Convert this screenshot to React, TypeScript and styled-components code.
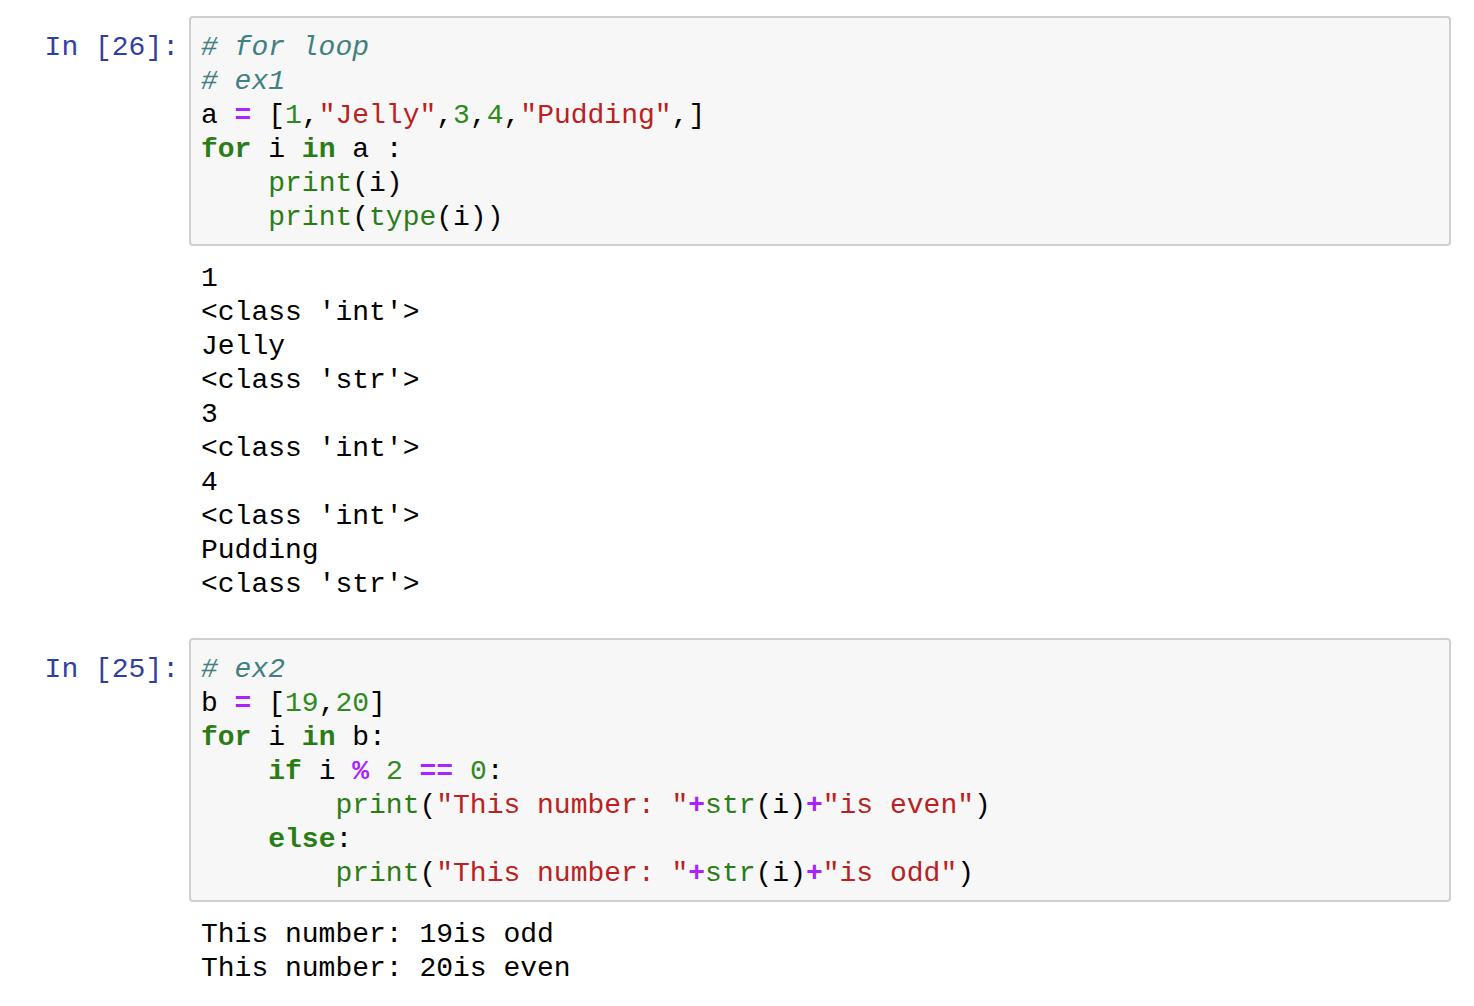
import React from "react";
import styled, { createGlobalStyle } from "styled-components";

const Global = createGlobalStyle`
  html, body { margin: 0; padding: 0; background: #ffffff; }
  body { font-family: "Liberation Mono", "DejaVu Sans Mono", monospace; }
`;

const Notebook = styled.div`
  display: flex;
  flex-direction: column;
  padding: 16px 23px 0 0;
`;

const Cell = styled.section<{ $gap?: number }>`
  display: flex;
  flex-direction: column;
  margin-bottom: ${(p) => p.$gap ?? 0}px;
`;

const InputRow = styled.div`
  display: flex;
  flex-direction: row;
  align-items: flex-start;
`;

const Prompt = styled.div`
  width: 179px;
  flex: 0 0 179px;
  margin-right: 10px;
  text-align: right;
  padding-top: 15px;
  font-family: "Liberation Mono", monospace;
  font-size: 28px;
  line-height: 34px;
  color: #303f9f;
  white-space: pre;
`;

const CodeBox = styled.pre`
  flex: 1;
  margin: 0;
  background: #f7f7f7;
  border: 2px solid #cfcfcf;
  border-radius: 4px;
  padding: 13px 10px 9px 10px;
  font-family: "Liberation Mono", monospace;
  font-size: 28px;
  line-height: 34px;
  color: #000000;
  white-space: pre;
`;

const Output = styled.pre`
  margin: 16px 0 0 201px;
  font-family: "Liberation Mono", monospace;
  font-size: 28px;
  line-height: 34px;
  color: #000000;
  white-space: pre;
`;

type Kind = "cm" | "kw" | "bi" | "num" | "str" | "op";

const colors: Record<Kind, string> = {
  cm: "#408080",
  kw: "#2a7d15",
  bi: "#2a7d15",
  num: "#2e8a1e",
  str: "#ba2121",
  op: "#aa22ff",
};

const Tok = styled.span<{ $k: Kind }>`
  color: ${(p) => colors[p.$k]};
  font-style: ${(p) => (p.$k === "cm" ? "italic" : "normal")};
  font-weight: ${(p) => (p.$k === "kw" || p.$k === "op" ? "bold" : "normal")};
`;

const T = ({ k, children }: { k: Kind; children: React.ReactNode }) => <Tok $k={k}>{children}</Tok>;

export default function App() {
  return (
    <>
      <Global />
      <Notebook>
        <Cell $gap={36}>
          <InputRow>
            <Prompt>In [26]:</Prompt>
            <CodeBox>
              <T k="cm"># for loop</T>
              {"\n"}
              <T k="cm"># ex1</T>
              {"\na "}
              <T k="op">=</T>
              {" ["}
              <T k="num">1</T>
              {","}
              <T k="str">"Jelly"</T>
              {","}
              <T k="num">3</T>
              {","}
              <T k="num">4</T>
              {","}
              <T k="str">"Pudding"</T>
              {",]\n"}
              <T k="kw">for</T>
              {" i "}
              <T k="kw">in</T>
              {" a :\n    "}
              <T k="bi">print</T>
              {"(i)\n    "}
              <T k="bi">print</T>
              {"("}
              <T k="bi">type</T>
              {"(i))"}
            </CodeBox>
          </InputRow>
          <Output>
            {"1\n<class 'int'>\nJelly\n<class 'str'>\n3\n<class 'int'>\n4\n<class 'int'>\nPudding\n<class 'str'>"}
          </Output>
        </Cell>
        <Cell>
          <InputRow>
            <Prompt>In [25]:</Prompt>
            <CodeBox>
              <T k="cm"># ex2</T>
              {"\nb "}
              <T k="op">=</T>
              {" ["}
              <T k="num">19</T>
              {","}
              <T k="num">20</T>
              {"]\n"}
              <T k="kw">for</T>
              {" i "}
              <T k="kw">in</T>
              {" b:\n    "}
              <T k="kw">if</T>
              {" i "}
              <T k="op">%</T>
              {" "}
              <T k="num">2</T>
              {" "}
              <T k="op">==</T>
              {" "}
              <T k="num">0</T>
              {":\n        "}
              <T k="bi">print</T>
              {"("}
              <T k="str">"This number: "</T>
              <T k="op">+</T>
              <T k="bi">str</T>
              {"(i)"}
              <T k="op">+</T>
              <T k="str">"is even"</T>
              {")\n    "}
              <T k="kw">else</T>
              {":\n        "}
              <T k="bi">print</T>
              {"("}
              <T k="str">"This number: "</T>
              <T k="op">+</T>
              <T k="bi">str</T>
              {"(i)"}
              <T k="op">+</T>
              <T k="str">"is odd"</T>
              {")"}
            </CodeBox>
          </InputRow>
          <Output>{"This number: 19is odd\nThis number: 20is even"}</Output>
        </Cell>
      </Notebook>
    </>
  );
}
